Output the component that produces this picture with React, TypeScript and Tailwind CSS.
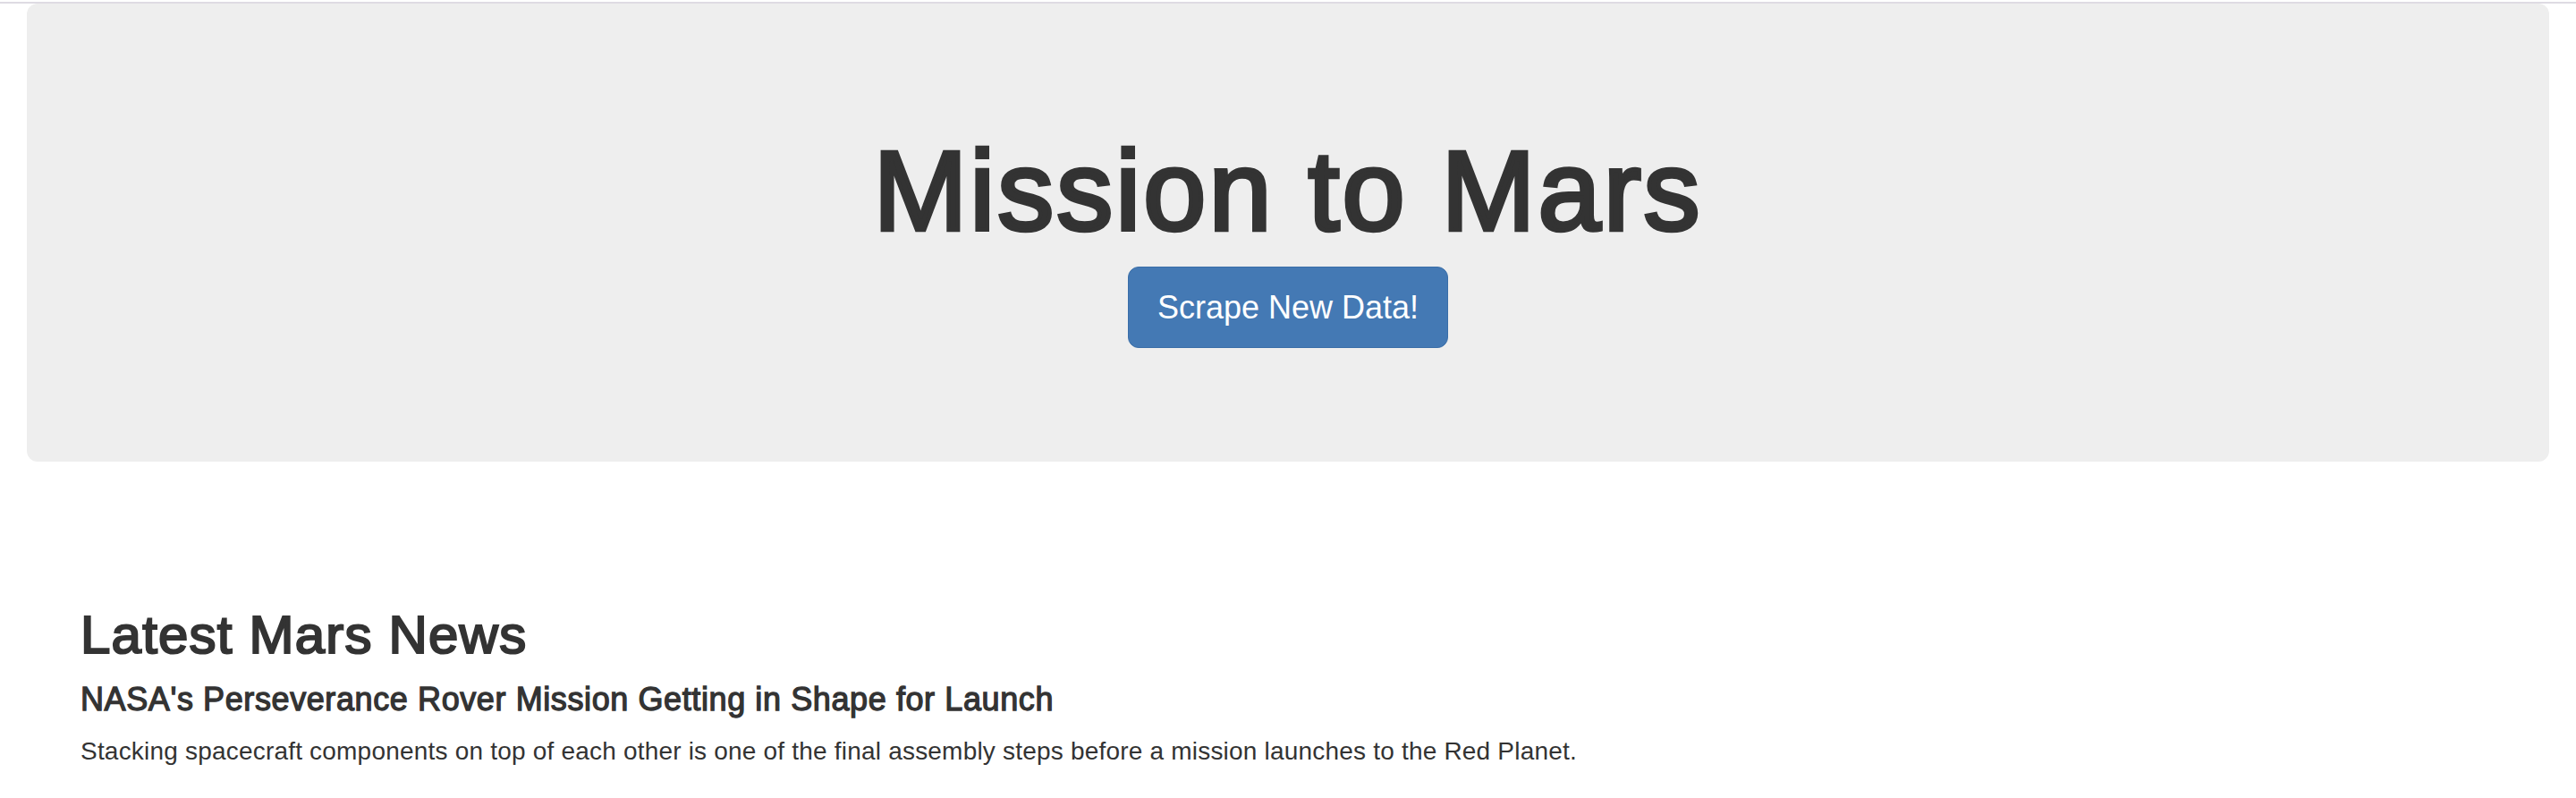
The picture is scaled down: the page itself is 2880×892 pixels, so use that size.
const App = () => {
  return (
    <div className="min-h-screen bg-white font-['Liberation_Sans',Arial,sans-serif] text-[#333333]">
      {/* thin top rule */}
      <div className="mt-[2px] h-[2px] bg-[#dedbe3]" />

      <div className="px-[30px]">
        <div className="flex flex-col items-center rounded-[12px] bg-[#eeeeee] pt-[140px] pb-[127px]">
          <h1 className="text-[126px] leading-[139px] font-medium tracking-[3px] [-webkit-text-stroke:4.5px_#333333]">
            Mission to Mars
          </h1>
          <button className="mt-[15px] rounded-[12px] border border-[#3a6ea8] bg-[#4479b4] px-[32px] pt-[21px] pb-[20px] text-[36px] leading-[48px] text-white">
            Scrape New Data!
          </button>
        </div>
      </div>

      <div className="px-[90px] pt-[161px]">
        <h2 className="text-[60px] leading-[66px] font-medium tracking-[0.02em] [-webkit-text-stroke:2.2px_#333333]">
          Latest Mars News
        </h2>
        <h4 className="mt-[19px] text-[36px] leading-[40px] font-medium tracking-[0.6px] [-webkit-text-stroke:1.3px_#333333]">
          NASA's Perseverance Rover Mission Getting in Shape for Launch
        </h4>
        <p className="mt-[18px] text-[28px] leading-[40px] tracking-[0.2px]">
          Stacking spacecraft components on top of each other is one of the final assembly steps before a mission launches to the Red Planet.
        </p>
      </div>
    </div>
  );
};

export default App;
